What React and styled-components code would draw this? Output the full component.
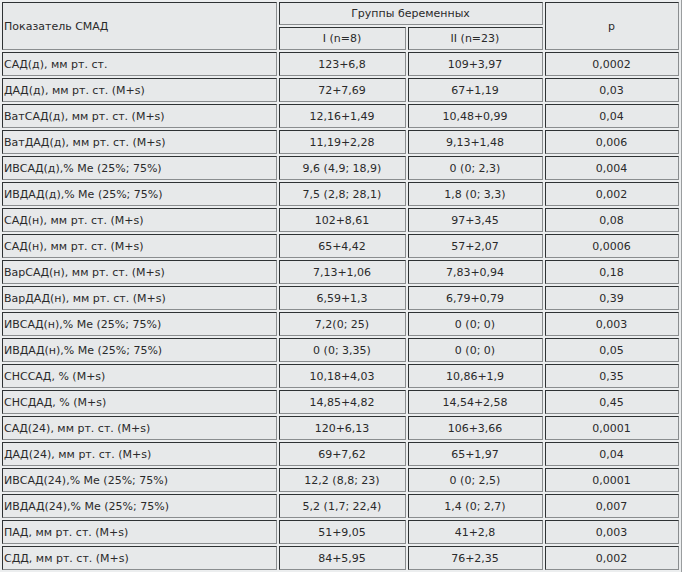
import React from "react";
import styled, { createGlobalStyle } from "styled-components";

const GlobalStyle = createGlobalStyle`
  html, body {
    margin: 0;
    padding: 0;
    background: #eceeef;
  }
`;

const rows = [
  ["САД(д), мм рт. ст.", "123+6,8", "109+3,97", "0,0002"],
  ["ДАД(д), мм рт. ст. (M+s)", "72+7,69", "67+1,19", "0,03"],
  ["ВатСАД(д), мм рт. ст. (M+s)", "12,16+1,49", "10,48+0,99", "0,04"],
  ["ВатДАД(д), мм рт. ст. (M+s)", "11,19+2,28", "9,13+1,48", "0,006"],
  ["ИВСАД(д),% Me (25%; 75%)", "9,6 (4,9; 18,9)", "0 (0; 2,3)", "0,004"],
  ["ИВДАД(д),% Me (25%; 75%)", "7,5 (2,8; 28,1)", "1,8 (0; 3,3)", "0,002"],
  ["САД(н), мм рт. ст. (M+s)", "102+8,61", "97+3,45", "0,08"],
  ["САД(н), мм рт. ст. (M+s)", "65+4,42", "57+2,07", "0,0006"],
  ["ВарСАД(н), мм рт. ст. (M+s)", "7,13+1,06", "7,83+0,94", "0,18"],
  ["ВарДАД(н), мм рт. ст. (M+s)", "6,59+1,3", "6,79+0,79", "0,39"],
  ["ИВСАД(н),% Me (25%; 75%)", "7,2(0; 25)", "0 (0; 0)", "0,003"],
  ["ИВДАД(н),% Me (25%; 75%)", "0 (0; 3,35)", "0 (0; 0)", "0,05"],
  ["СНССАД, % (M+s)", "10,18+4,03", "10,86+1,9", "0,35"],
  ["СНСДАД, % (M+s)", "14,85+4,82", "14,54+2,58", "0,45"],
  ["САД(24), мм рт. ст. (M+s)", "120+6,13", "106+3,66", "0,0001"],
  ["ДАД(24), мм рт. ст. (M+s)", "69+7,62", "65+1,97", "0,04"],
  ["ИВСАД(24),% Me (25%; 75%)", "12,2 (8,8; 23)", "0 (0; 2,5)", "0,0001"],
  ["ИВДАД(24),% Me (25%; 75%)", "5,2 (1,7; 22,4)", "1,4 (0; 2,7)", "0,007"],
  ["ПАД, мм рт. ст. (M+s)", "51+9,05", "41+2,8", "0,003"],
  ["СДД, мм рт. ст. (M+s)", "84+5,95", "76+2,35", "0,002"],
];

const Table = styled.table`
  width: 682px;
  table-layout: fixed;
  border-collapse: separate;
  border-spacing: 2px;
  border: 0;
  border-right: 1px solid #9a9d9f;
  border-bottom: 1px solid #9a9d9f;
  background: #eceeef;
  font-family: "DejaVu Sans", Verdana, sans-serif;
  font-size: 11px;
  color: #2a2a2a;
`;

const Cell = styled.td`
  height: ${props => props.h || 22}px;
  padding: 0 2px 0 1px;
  box-sizing: content-box;
  background: #e7e9ea;
  border-top: 1px solid #2e3234;
  border-left: 1px solid #2e3234;
  border-right: 1px solid #8a8d8f;
  border-bottom: 1px solid #8a8d8f;
  text-align: ${props => (props.left ? "left" : "center")};
  vertical-align: middle;
  white-space: nowrap;
  overflow: hidden;
`;

export default function App() {
  return (
    <>
      <GlobalStyle />
      <Table>
        <colgroup>
          <col style={{ width: 275 }} />
          <col style={{ width: 127 }} />
          <col style={{ width: 135 }} />
          <col style={{ width: 134 }} />
        </colgroup>
        <thead>
          <tr>
            <Cell left rowSpan={2}>Показатель СМАД</Cell>
            <Cell colSpan={2} h={21}>Группы беременных</Cell>
            <Cell rowSpan={2}>p</Cell>
          </tr>
          <tr>
            <Cell h={21}>I (n=8)</Cell>
            <Cell h={21}>II (n=23)</Cell>
          </tr>
        </thead>
        <tbody>
          {rows.map((r, i) => (
            <tr key={i}>
              <Cell left>{r[0]}</Cell>
              <Cell>{r[1]}</Cell>
              <Cell>{r[2]}</Cell>
              <Cell>{r[3]}</Cell>
            </tr>
          ))}
        </tbody>
      </Table>
    </>
  );
}
